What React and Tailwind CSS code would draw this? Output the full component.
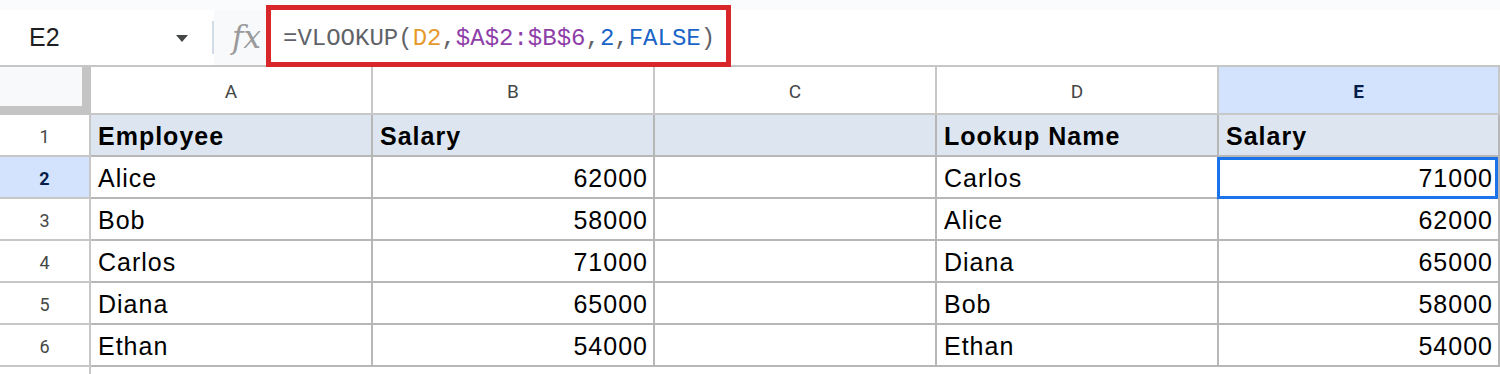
import React from 'react';

const data = [
    ['Employee', 'Salary', '', 'Lookup Name', 'Salary'],
    ['Alice', '62000', '', 'Carlos', '71000'],
    ['Bob', '58000', '', 'Alice', '62000'],
    ['Carlos', '71000', '', 'Diana', '65000'],
    ['Diana', '65000', '', 'Bob', '58000'],
    ['Ethan', '54000', '', 'Ethan', '54000'],
];

const cols = ['A', 'B', 'C', 'D', 'E'];

function Cell({ value, header, rowIdx, colIdx }) {
    const isNum = /^\d+$/.test(value);
    const last = colIdx === 4;
    const selected = rowIdx === 1 && colIdx === 4;
    return (
        <div
            className={
                'relative h-full flex items-center pt-[3px] border-r-2 border-b-2 border-[#b7b7b7] text-[25px] tracking-[1px] text-black ' +
                (last ? 'w-[281px] ' : 'w-[282px] ') +
                (header ? 'bg-[#dde6f0] font-bold ' : 'bg-white ') +
                (isNum ? 'justify-end pr-[5px]' : 'pl-[7px]')
            }
        >
            {value}
            {selected && (
                <div className="absolute -left-[2px] top-0 right-0 -bottom-[2px] border-[3px] border-[#1a73e8]" />
            )}
        </div>
    );
}

export default function App() {
    return (
        <div className="relative w-[1500px] h-[374px] overflow-hidden bg-white font-['Liberation_Sans',Arial,sans-serif]">
            <div className="h-[10px] bg-[#f9fbfd]" />

            {/* toolbar: name box + formula bar */}
            <div className="flex h-[57px] border-b-2 border-[#c4c7c5]">
                <div className="relative w-[212px] flex items-center bg-white pl-[29px]">
                    <span className="text-[25px] text-[#1f1f1f]">E2</span>
                    <svg className="absolute left-[176px] top-[25px]" width="12" height="7" viewBox="0 0 12 7">
                        <path d="M0 0 L12 0 L6 7 Z" fill="#444746" />
                    </svg>
                </div>
                <div className="w-[2px] self-center h-[33px] bg-[#d3dbe6]" />
                <div className="w-[52px] flex items-center justify-end bg-[#f8f9fa] pr-[5px]">
                    <span className="text-[31px] italic text-[#9a9a9a] font-['DejaVu_Serif',serif] leading-none">fx</span>
                </div>
                <div className="flex-1 flex items-center bg-white pl-[17px] pt-[2px] font-['Liberation_Mono',monospace] text-[24px] text-[#5f6368]">
                    <span>=VLOOKUP(</span>
                    <span className="text-[#e69a2e]">D2</span>
                    <span>,</span>
                    <span className="text-[#8e3ea8]">$A$2:$B$6</span>
                    <span>,</span>
                    <span className="text-[#1a64c8]">2</span>
                    <span>,</span>
                    <span className="text-[#1a64c8]">FALSE</span>
                    <span>)</span>
                </div>
            </div>

            {/* annotation around the formula */}
            <div className="absolute left-[266px] top-[5px] w-[465px] h-[62px] border-[5px] border-[#d9262a]" />

            {/* column headers */}
            <div className="flex h-[48px]">
                <div className="w-[91px] h-full bg-[#f8f9fa] border-r-[9px] border-b-[9px] border-[#c4c4c4]" />
                {cols.map((c, i) => (
                    <div
                        key={c}
                        className={
                            'h-full flex items-center justify-center pt-[4px] border-r-2 border-b-2 border-[#c7c7c7] text-[19px] font-["Roboto",sans-serif] ' +
                            (i === 4 ? 'w-[281px] bg-[#d3e3fd] font-bold text-[#041e49]' : 'w-[282px] bg-white text-[#444746]')
                        }
                    >
                        {c}
                    </div>
                ))}
            </div>

            {data.map((row, r) => (
                <div key={r} className="flex h-[42px]">
                    <div
                        className={
                            'w-[91px] h-full flex items-center justify-center pt-[3px] border-r-2 border-b-2 border-[#c7c7c7] text-[18px] font-["Roboto",sans-serif] ' +
                            (r === 1 ? 'bg-[#d3e3fd] font-bold text-[#041e49]' : 'bg-white text-[#444746]')
                        }
                    >
                        {r + 1}
                    </div>
                    {row.map((v, c) => (
                        <Cell key={c} value={v} header={r === 0} rowIdx={r} colIdx={c} />
                    ))}
                </div>
            ))}

            <div className="flex h-[7px]">
                <div className="w-[91px] h-full border-r-2 border-[#c7c7c7]" />
            </div>
        </div>
    );
}
